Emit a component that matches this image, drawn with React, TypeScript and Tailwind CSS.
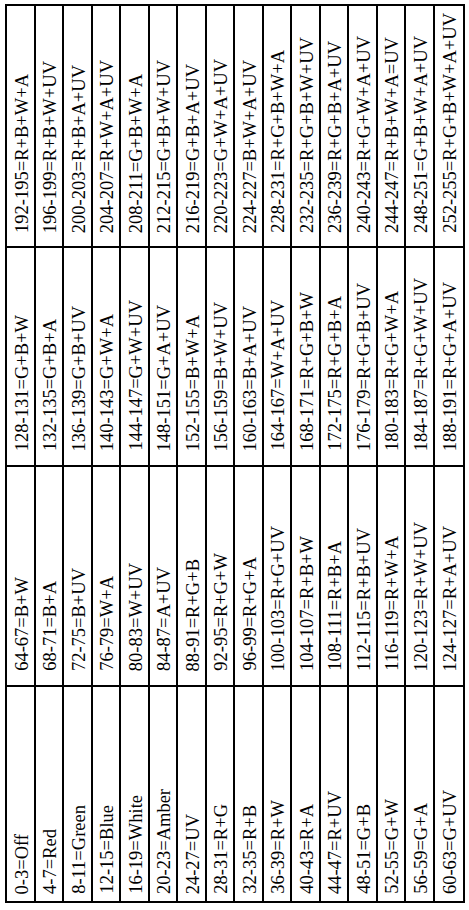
import React from "react";

const band1 = [
  "192-195=R+B+W+A",
  "196-199=R+B+W+UV",
  "200-203=R+B+A+UV",
  "204-207=R+W+A+UV",
  "208-211=G+B+W+A",
  "212-215=G+B+W+UV",
  "216-219=G+B+A+UV",
  "220-223=G+W+A+UV",
  "224-227=B+W+A+UV",
  "228-231=R+G+B+W+A",
  "232-235=R+G+B+W+UV",
  "236-239=R+G+B+A+UV",
  "240-243=R+G+W+A+UV",
  "244-247=R+B+W+A=UV",
  "248-251=G+B+W+A+UV",
  "252-255=R+G+B+W+A+UV",
];
const band2 = [
  "128-131=G+B+W",
  "132-135=G+B+A",
  "136-139=G+B+UV",
  "140-143=G+W+A",
  "144-147=G+W+UV",
  "148-151=G+A+UV",
  "152-155=B+W+A",
  "156-159=B+W+UV",
  "160-163=B+A+UV",
  "164-167=W+A+UV",
  "168-171=R+G+B+W",
  "172-175=R+G+B+A",
  "176-179=R+G+B+UV",
  "180-183=R+G+W+A",
  "184-187=R+G+W+UV",
  "188-191=R+G+A+UV",
];
const band3 = [
  "64-67=B+W",
  "68-71=B+A",
  "72-75=B+UV",
  "76-79=W+A",
  "80-83=W+UV",
  "84-87=A+UV",
  "88-91=R+G+B",
  "92-95=R+G+W",
  "96-99=R+G+A",
  "100-103=R+G+UV",
  "104-107=R+B+W",
  "108-111=R+B+A",
  "112-115=R+B+UV",
  "116-119=R+W+A",
  "120-123=R+W+UV",
  "124-127=R+A+UV",
];
const band4 = [
  "0-3=Off",
  "4-7=Red",
  "8-11=Green",
  "12-15=Blue",
  "16-19=White",
  "20-23=Amber",
  "24-27=UV",
  "28-31=R+G",
  "32-35=R+B",
  "36-39=R+W",
  "40-43=R+A",
  "44-47=R+UV",
  "48-51=G+B",
  "52-55=G+W",
  "56-59=G+A",
  "60-63=G+UV",
];

function Cell({ text, last, bottomRow, pad }: { text: string; last: boolean; bottomRow: boolean; pad: string }) {
  return (
    <div
      className={
        "flex items-end justify-center pl-[3px] border-black " +
        (last ? "" : "border-r-2 ") +
        (bottomRow ? "" : "border-b-2 ") +
        pad
      }
    >
      <span className="[writing-mode:vertical-rl] rotate-180 whitespace-nowrap text-[18.5px] leading-[20px] text-black">
        {text}
      </span>
    </div>
  );
}

export default function App() {
  const bands: { items: string[]; pad: string }[] = [
    { items: band1, pad: "pb-[13px]" },
    { items: band2, pad: "pb-[14px]" },
    { items: band3, pad: "pb-[14px]" },
    { items: band4, pad: "pb-[7px]" },
  ];
  return (
    <div
      className="w-[469px] h-[910px] bg-white pt-[4px] pl-[5px]"
      style={{ fontFamily: '"Liberation Serif", "Times New Roman", serif' }}
    >
      <div className="grid w-[460px] grid-cols-[repeat(16,minmax(0,1fr))] grid-rows-[242px_219px_220px_214px] border-2 border-black">
        {bands.map((b, bi) =>
          b.items.map((t, i) => (
            <Cell key={bi + "-" + i} text={t} last={i === 15} bottomRow={bi === 3} pad={b.pad} />
          ))
        )}
      </div>
    </div>
  );
}
